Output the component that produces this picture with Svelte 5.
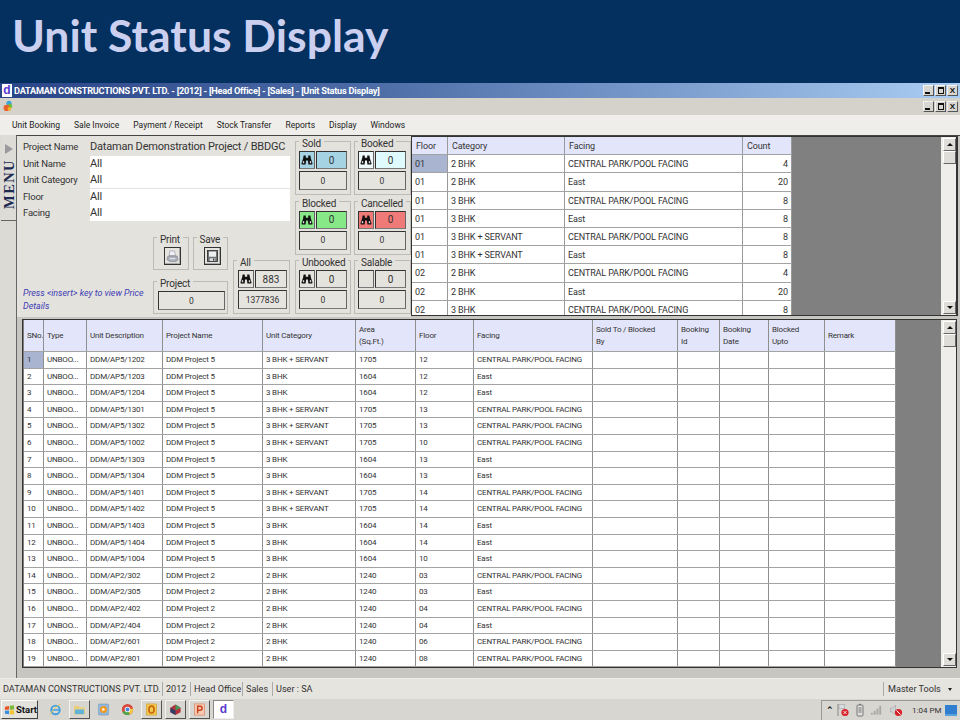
<script>
  const menus = ['Unit Booking', 'Sale Invoice', 'Payment / Receipt', 'Stock Transfer', 'Reports', 'Display', 'Windows'];
  const form = [['Project Name', 'Dataman Demonstration Project / BBDGC'], ['Unit Name', 'All'], ['Unit Category', 'All'], ['Floor', 'All'], ['Facing', 'All']];
  const cards = [
    { name: 'Sold', tone: 'sold', icon: true },
    { name: 'Booked', tone: 'booked', icon: true },
    { name: 'Blocked', tone: 'blocked', icon: true },
    { name: 'Cancelled', tone: 'cancelled', icon: true },
    { name: 'Unbooked', tone: 'plain', icon: true },
    { name: 'Salable', tone: 'plain', icon: false }
  ];
  const C = 'CENTRAL PARK/POOL FACING';
  const topRows = [
    ['01', '2 BHK', C, 4], ['01', '2 BHK', 'East', 20], ['01', '3 BHK', C, 8], ['01', '3 BHK', 'East', 8],
    ['01', '3 BHK + SERVANT', C, 8], ['01', '3 BHK + SERVANT', 'East', 8], ['02', '2 BHK', C, 4], ['02', '2 BHK', 'East', 20], ['02', '3 BHK', C, 8]
  ];
  const S = '3 BHK + SERVANT', B3 = '3 BHK', B2 = '2 BHK';
  const rows = [
    ['AP5/1202', 5, S, 1705, 12, C], ['AP5/1203', 5, B3, 1604, 12, 'East'], ['AP5/1204', 5, B3, 1604, 12, 'East'],
    ['AP5/1301', 5, S, 1705, 13, C], ['AP5/1302', 5, S, 1705, 13, C], ['AP5/1002', 5, S, 1705, 10, C],
    ['AP5/1303', 5, B3, 1604, 13, 'East'], ['AP5/1304', 5, B3, 1604, 13, 'East'], ['AP5/1401', 5, S, 1705, 14, C],
    ['AP5/1402', 5, S, 1705, 14, C], ['AP5/1403', 5, B3, 1604, 14, 'East'], ['AP5/1404', 5, B3, 1604, 14, 'East'],
    ['AP5/1004', 5, B3, 1604, 10, 'East'], ['AP2/302', 2, B2, 1240, '03', C], ['AP2/305', 2, B2, 1240, '03', 'East'],
    ['AP2/402', 2, B2, 1240, '04', C], ['AP2/404', 2, B2, 1240, '04', 'East'], ['AP2/601', 2, B2, 1240, '06', C], ['AP2/801', 2, B2, 1240, '08', C]
  ];
  const heads = ['SNo.', 'Type', 'Unit Description', 'Project Name', 'Unit Category', 'Area\n(Sq.Ft.)', 'Floor', 'Facing', 'Sold To / Blocked\nBy', 'Booking\nId', 'Booking\nDate', 'Blocked\nUpto', 'Remark'];
</script>

{#snippet binoc()}
  <svg class="binoc" viewBox="0 0 12 10" aria-hidden="true">
    <path d="M2.6 0.6h2.2v2.2h2.4V0.6h2.2l0.5 3 1.6 4.6-0.3 1.4H7.4L6.9 5.4H5.1L4.6 9.6H0.8L0.5 8.2 2.1 3.6z" fill="#111" />
    <rect x="1.8" y="6.2" width="1.4" height="2" fill="#ddd" />
    <rect x="8.8" y="6.2" width="1.4" height="2" fill="#ddd" />
  </svg>
{/snippet}

{#snippet scrollbar()}
  <div class="scroll">
    <div class="sbtn"><span class="up"></span></div>
    <div class="thumb"></div>
    <div class="track"></div>
    <div class="sbtn"><span class="down"></span></div>
  </div>
{/snippet}

{#snippet winbtns()}
  <div class="winbtns">
    <span class="wb"><i class="min"></i></span>
    <span class="wb"><i class="rest"></i></span>
    <span class="wb x">X</span>
  </div>
{/snippet}

{#snippet appicon()}
  <span class="appicon">d</span>
{/snippet}

<div class="page">
  <header class="slide"><h1>Unit Status Display</h1></header>

  <div class="titlebar">
    {@render appicon()}
    <span class="ttext">DATAMAN CONSTRUCTIONS PVT. LTD. - [2012] - [Head Office] - [Sales] - [Unit Status Display]</span>
    {@render winbtns()}
  </div>

  <div class="toolbar">
    <svg class="logo" viewBox="0 0 12 13" aria-hidden="true">
      <circle cx="6.5" cy="3" r="2.8" fill="#3aa6d8" />
      <circle cx="7.5" cy="6" r="2.6" fill="#6cbf3c" />
      <circle cx="4" cy="8" r="3.4" fill="#e8622a" />
      <circle cx="7" cy="9" r="2" fill="#f2b62c" />
    </svg>
    {@render winbtns()}
  </div>

  <nav class="menubar">
    {#each menus as m}<span>{m}</span>{/each}
  </nav>

  <div class="body">
    <aside class="side">
      <div class="tab">
        <span class="tri"></span>
        <span class="menu">MENU</span>
      </div>
    </aside>

    <main class="content">
      <section class="upper">
        <div class="panel">
          <div class="left">
            <div class="form">
              {#each form as [k, v], i}
                <div class="frow">
                  <span class="flabel">{k}</span>
                  <span class="fval" class:white={i > 0}>{v}</span>
                </div>
              {/each}
            </div>
            <div class="lower">
              <p class="hint"><em>Press &lt;insert&gt; key to view Price Details</em></p>
              <div class="mid">
                <div class="pair">
                  <div class="group small">
                    <span class="legend">Print</span>
                    <div class="tool">
                      <svg viewBox="0 0 14 14" aria-hidden="true">
                        <path d="M4 1.5h5l1.5 5H3.5z" fill="#eef0f5" stroke="#8a8f9a" stroke-width=".6" />
                        <path d="M2 7h10l1 4-2 2H4l-3-2z" fill="#a9adb6" stroke="#7a7e88" stroke-width=".6" />
                        <rect x="4" y="9" width="6" height="1.5" fill="#dfe2e8" />
                      </svg>
                    </div>
                  </div>
                  <div class="group small">
                    <span class="legend">Save</span>
                    <div class="tool">
                      <svg viewBox="0 0 14 14" aria-hidden="true">
                        <rect x="1.5" y="1" width="11" height="12" fill="#6d7176" stroke="#222" stroke-width=".8" />
                        <rect x="3.2" y="2.2" width="7.6" height="5.6" fill="#eceef0" />
                        <rect x="4" y="9.4" width="6" height="3" fill="#d8dade" />
                        <rect x="7.6" y="9.8" width="1.4" height="2.2" fill="#333" />
                      </svg>
                    </div>
                  </div>
                </div>
                <div class="group project">
                  <span class="legend">Project</span>
                  <div class="box pbox">0</div>
                </div>
              </div>
              <div class="group card allcard">
                <span class="legend">All</span>
                <div class="cardtop">
                  <div class="box ic">{@render binoc()}</div>
                  <div class="box val big">883</div>
                </div>
                <div class="box total">1377836</div>
              </div>
            </div>
          </div>

          <div class="cards">
            {#each cards as c}
              <div class="group card">
                <span class="legend">{c.name}</span>
                <div class="cardtop">
                  <div class="box ic {c.tone}">{#if c.icon}{@render binoc()}{/if}</div>
                  <div class="box val {c.tone}">0</div>
                </div>
                <div class="box total">0</div>
              </div>
            {/each}
          </div>
        </div>

        <div class="frame topframe">
          <div class="gridarea">
            <div class="trow thead">
              <span>Floor</span><span>Category</span><span>Facing</span><span>Count</span>
            </div>
            {#each topRows as r, i}
              <div class="trow">
                <span class:sel={i === 0}>{r[0]}</span><span>{r[1]}</span><span>{r[2]}</span><span class="num">{r[3]}</span>
              </div>
            {/each}
          </div>
          {@render scrollbar()}
        </div>
      </section>

      <section class="frame bottomframe">
        <div class="gridarea">
          <div class="brow bhead">
            {#each heads as h}<span>{h}</span>{/each}
          </div>
          {#each rows as r, i}
            <div class="brow">
              <span class:sel={i === 0}>{i + 1}</span>
              <span>UNBOO...</span>
              <span>DDM/{r[0]}</span>
              <span>DDM Project {r[1]}</span>
              <span>{r[2]}</span>
              <span>{r[3]}</span>
              <span>{r[4]}</span>
              <span>{r[5]}</span>
              <span></span><span></span><span></span><span></span><span></span>
            </div>
          {/each}
        </div>
        {@render scrollbar()}
      </section>
    </main>
  </div>

  <footer class="status">
    <span class="s1">DATAMAN CONSTRUCTIONS PVT. LTD.</span>
    <span class="s2">2012</span>
    <span class="s3">Head Office</span>
    <span class="s4">Sales</span>
    <span class="s5">User : SA</span>
    <span class="tools">Master Tools <i class="caret"></i></span>
  </footer>

  <div class="taskbar">
    <div class="start">
      <svg viewBox="0 0 12 12" aria-hidden="true">
        <path d="M1 2.5 5.5 1.5v4L1 6z" fill="#e8562a" /><path d="M6.3 1.3 11 .8v4.6l-4.7.2z" fill="#7cb83a" />
        <path d="M1 6.8l4.5-.3v4L1 10z" fill="#3a8ee0" /><path d="M6.3 6.4l4.7-.2v4.8l-4.7-.5z" fill="#f4c430" />
      </svg>
      <b>Start</b>
    </div>
    <div class="tasks">
      <span class="task"><svg viewBox="0 0 14 14" aria-hidden="true"><circle cx="7" cy="7.5" r="4.6" fill="none" stroke="#3f9fe0" stroke-width="2" /><path d="M3 7.5h8" stroke="#3f9fe0" stroke-width="1.6" /><path d="M1.5 12.5C3 8 8 3 12.5 1.5" fill="none" stroke="#e5c04a" stroke-width=".9" /></svg></span>
      <span class="task raised"><svg viewBox="0 0 14 14" aria-hidden="true"><path d="M1 3h5l1 1.5h6v8H1z" fill="#e9cf7c" /><rect x="2" y="7" width="10" height="5" fill="#5fb3d8" /></svg></span>
      <span class="task"><svg viewBox="0 0 14 14" aria-hidden="true"><rect x="1.5" y="1" width="11" height="12" rx="1" fill="#8fb6dc" stroke="#6a90b8" stroke-width=".5" /><circle cx="7" cy="7" r="3.8" fill="#f19a22" /><path d="M5.8 5l3 2-3 2z" fill="#fff" /></svg></span>
      <span class="task"><svg viewBox="0 0 14 14" aria-hidden="true"><circle cx="7" cy="7" r="6" fill="#d9473a" /><path d="M7 7 1.6 9.6A6 6 0 0 0 9.5 12.4z" fill="#4aa84a" /><path d="M7 7 9.5 12.4A6 6 0 0 0 12.9 6z" fill="#f1c83a" /><circle cx="7" cy="7" r="3" fill="#fff" /><circle cx="7" cy="7" r="2.1" fill="#4a86d8" /></svg></span>
      <span class="task raised"><svg viewBox="0 0 14 14" aria-hidden="true"><rect x="1.5" y="1" width="11" height="12" fill="#f2c84a" stroke="#c99a2a" stroke-width=".6" /><ellipse cx="7" cy="7" rx="2.8" ry="3.8" fill="none" stroke="#c8660f" stroke-width="1.8" /></svg></span>
      <span class="task raised"><svg viewBox="0 0 14 14" aria-hidden="true"><path d="M7 1.5 12.5 5v5L7 13 1.5 10V5z" fill="#b5303a" /><path d="M7 1.5 12.5 5 7 8z" fill="#3e9a5a" /><path d="M1.5 5 7 8v5L1.5 10z" fill="#2f3e66" /></svg></span>
      <span class="task raised"><svg viewBox="0 0 14 14" aria-hidden="true"><rect x="1.5" y="1" width="11" height="12" fill="#f6c9b4" stroke="#d8744a" stroke-width=".6" /><path d="M5 11V3.5h2.6a2 2 0 0 1 0 4.4H5" fill="none" stroke="#c8431a" stroke-width="1.6" /></svg></span>
      <span class="task active">{@render appicon()}</span>
    </div>
    <div class="tray">
      <span class="chev">⌃</span>
      <svg class="t1" viewBox="0 0 14 14" aria-hidden="true"><path d="M2 1v12" stroke="#888" /><path d="M3 1.5h6l-1 2 1 2H3z" fill="#d8dde4" stroke="#999" stroke-width=".5" /><circle cx="9" cy="9.5" r="3.6" fill="#d8232a" /><path d="M7.6 8.1l2.8 2.8m0-2.8-2.8 2.8" stroke="#fff" stroke-width=".9" /></svg>
      <svg class="t2" viewBox="0 0 8 14" aria-hidden="true"><rect x="1" y="2" width="6" height="11" rx="1" fill="#dfe0dc" stroke="#777" /><rect x="3" y=".8" width="2" height="1.2" fill="#777" /><rect x="2.4" y="4" width="3.2" height="6" fill="#aaa" /></svg>
      <svg class="t3" viewBox="0 0 14 12" aria-hidden="true"><g fill="#a8a8a4"><rect x="1" y="9" width="2" height="2" /><rect x="4" y="7" width="2" height="4" /><rect x="7" y="4.5" width="2" height="6.5" /><rect x="10" y="1.5" width="2" height="9.5" /></g></svg>
      <svg class="t4" viewBox="0 0 14 14" aria-hidden="true"><path d="M1.5 5h2l3-3v10l-3-3h-2z" fill="#cfd2d4" stroke="#999" stroke-width=".5" /><circle cx="9.5" cy="9.5" r="3.6" fill="#d8232a" /><path d="M7.5 7.5l4 4" stroke="#fff" stroke-width="1" /></svg>
      <span class="clock">1:04 PM</span>
      <svg class="t5" viewBox="0 0 12 11" aria-hidden="true"><rect width="12" height="9" fill="#2f7ed0" /><rect y="9" width="12" height="2" fill="#56a0dc" /></svg>
    </div>
  </div>
</div>

<style>
  :global(body) { margin: 0; }
  .page {
    width: 960px; height: 720px; overflow: hidden; display: flex; flex-direction: column;
    font-family: Roboto, "Liberation Sans", Arial, sans-serif; color: #2b2b2b; background: #d8d6d1;
  }
  .slide { height: 83px; flex: none; background: #03305f; box-sizing: border-box; padding: 10px 0 0 12px; }
  h1 { margin: 0; font: 700 44.5px/50px Lato, sans-serif; color: #ccd0f0; }

  .titlebar {
    height: 15px; flex: none; display: flex; align-items: center; padding: 0 2px;
    background: linear-gradient(90deg, #2a4488 0%, #4e6ea8 40%, #a9cdf3 100%);
  }
  .appicon {
    width: 10px; height: 13px; flex: none; background: #fff; color: #5a3ad0; display: block;
    font: 700 12px/12px "Liberation Sans", sans-serif; text-align: center;
  }
  .ttext { margin-left: 2px; color: #fff; font: 700 9.2px/15px Roboto, sans-serif; letter-spacing: -0.23px; white-space: nowrap; }
  .winbtns { margin-left: auto; display: flex; gap: 1px; }
  .wb {
    width: 11px; height: 11px; box-sizing: border-box; background: #d8d6d0; display: block; position: relative;
    border: 1px solid; border-color: #f4f3ef #555 #555 #f4f3ef; font: 700 8px/9px "Liberation Sans", sans-serif; text-align: center; color: #111;
  }
  .min { position: absolute; left: 1px; bottom: 1px; width: 5px; height: 2px; background: #111; }
  .rest { position: absolute; left: 2px; top: 1px; width: 4px; height: 4px; border: 1px solid #111; border-top-width: 2px; }

  .toolbar { height: 17px; flex: none; background: #d5d2cb; display: flex; align-items: center; padding: 0 2px 0 3px; box-sizing: border-box; }
  .logo { width: 11px; height: 13px; }

  .menubar {
    height: 20px; flex: none; background: #efeeea; display: flex; gap: 14px; padding-left: 12px; box-sizing: border-box;
    font-size: 8.5px; line-height: 20px; color: #222;
  }

  .body { flex: 1; min-height: 0; display: flex; background: #d3d1cc; }
  .side { width: 16px; flex: none; background: #dcdad5; }
  .tab {
    height: 86px; width: 15px; margin-left: 1px; box-sizing: border-box; background: #dedcd7; border-bottom: 1px solid #666;
    display: flex; flex-direction: column; align-items: center; padding-top: 9px; overflow: hidden;
  }
  .tri { border-left: 8px solid #9a9a9e; border-top: 5px solid transparent; border-bottom: 5px solid transparent; width: 0; height: 0; flex: none; }
  .menu {
    margin-top: 5px; writing-mode: vertical-rl; transform: rotate(180deg);
    font: 700 14.5px/14px "Liberation Serif", serif; letter-spacing: 1.4px; color: #1d2a52;
  }
  .content {
    flex: 1; min-width: 0; display: flex; flex-direction: column; box-sizing: border-box;
    border-left: 1px solid #666; border-top: 1px solid #444; padding-bottom: 10px; background: #c8c6c1;
  }

  .upper { height: 181px; flex: none; display: flex; }
  .panel { width: 394px; flex: none; display: flex; background: #e4e2dd; box-sizing: border-box; padding: 0 0 0 6px; }
  .left { width: 272px; flex: none; display: flex; flex-direction: column; }
  .form { padding: 3px 5px 0 0; }
  .frow { display: grid; grid-template-columns: 67px 1fr; height: 16.5px; align-items: stretch; }
  .flabel { font-size: 9.5px; letter-spacing: -0.2px; line-height: 15px; color: #333; white-space: nowrap; }
  .fval { font-size: 11px; letter-spacing: -0.2px; line-height: 16px; color: #333; white-space: nowrap; border-bottom: 1px solid transparent; box-sizing: border-box; }
  .fval.white { background: #fff; border-bottom-color: #e4e2dd; }

  .lower { margin-top: auto; display: flex; align-items: flex-end; padding-bottom: 3px; }
  .hint { margin: 0; width: 130px; flex: none; font-size: 8.9px; line-height: 13px; color: #3b3bb4; padding-bottom: 1px; }
  .mid { width: 75px; flex: none; display: flex; flex-direction: column; gap: 11px; margin-right: 5px; }
  .pair { display: flex; gap: 4px; }

  .group { position: relative; box-sizing: border-box; border: 1px solid #bdbbb6; }
  .legend {
    position: absolute; top: -4px; left: 3px; padding: 0 3px; background: #e4e2dd;
    font-size: 10px; letter-spacing: -0.2px; line-height: 12px; color: #333; white-space: nowrap;
  }
  .small { width: 36px; height: 33px; padding: 9px 0 0 10px; }
  .tool {
    width: 17px; height: 18px; box-sizing: border-box; border: 1px solid #333; background: #e6e4df; padding: 1px;
    box-shadow: inset -1px -1px 0 #aaa;
  }
  .tool svg { display: block; width: 100%; height: 100%; }
  .project { height: 33px; padding: 9px 0 0 4px; }
  .pbox { width: 67px; height: 19px; }

  .box {
    box-sizing: border-box; border: 1px solid; border-color: #333 #666 #777 #333; background: #e6e4df;
    display: flex; align-items: center; justify-content: center; font-size: 8.5px; color: #333;
  }
  .cards {
    width: 116px; flex: none; display: grid; grid-template-columns: 56px 57px; gap: 5.5px 3px;
    grid-auto-rows: 54px; padding: 5px 0 0 0;
  }
  .card { padding: 9px 0 0 3px; height: 54px; }
  .cardtop { display: flex; gap: 1px; margin-bottom: 2px; width: 48px; height: 18px; }
  .ic { width: 16px; flex: none; }
  .val { flex: 1; font-size: 10px; }
  .total { width: 48px; height: 19px; }
  .allcard { width: 57px; padding-left: 4px; }
  .allcard .cardtop, .allcard .total { width: 49px; }
  .big { font-size: 10px; }
  .binoc { width: 12px; height: 10px; display: block; }
  .sold { background: #a6d3e4; }
  .booked { background: #e0fbfd; }
  .booked.ic { background: #eefafa; }
  .blocked { background: #86e886; }
  .cancelled { background: #f07a78; }
  .plain { background: #e4e2dd; }

  .frame { display: flex; box-sizing: border-box; background: #808080; overflow: hidden; }
  .topframe { flex: 1; min-width: 0; border: 1px solid #333; border-width: 1px 2px 1px 1px; height: 180px; margin-right: 2px; }
  .gridarea { flex: 1; min-width: 0; overflow: hidden; }

  .trow {
    display: grid; grid-template-columns: 36px 117px 178px 49px; width: 380px; height: 18.2px; box-sizing: border-box;
    background: #fff; font-size: 9px; letter-spacing: -0.12px; line-height: 18px; color: #333; border-bottom: 1px solid #a3a3a3;
  }
  .trow span { padding-left: 3px; border-right: 1px solid #9a9a9a; white-space: nowrap; overflow: hidden; }
  .trow .num { text-align: right; padding: 0 3px 0 0; }
  .thead { background: #e3e6fa; }
  .thead span { padding-left: 4px; }
  .sel { background: #a8b4d0; }

  .scroll { width: 15px; flex: none; display: flex; flex-direction: column; background: #efeeea; box-sizing: border-box; padding: 1px 0 1px 2px; }
  .sbtn {
    height: 13px; flex: none; box-sizing: border-box; background: #dfddd8; border: 1px solid; border-color: #fff #666 #666 #fff;
    display: flex; align-items: center; justify-content: center;
  }
  .up { border-left: 3px solid transparent; border-right: 3px solid transparent; border-bottom: 3px solid #111; }
  .down { border-left: 3px solid transparent; border-right: 3px solid transparent; border-top: 3px solid #111; }
  .thumb { height: 13px; flex: none; box-sizing: border-box; background: #dfddd8; border: 1px solid; border-color: #fff #666 #666 #fff; }
  .track { flex: 1; background: #efeeea; }

  .bottomframe { margin: 2px 3px 0 5px; flex: 1; min-height: 0; border: 1px solid #333; padding: 0 0 0 1px; }
  .brow {
    display: grid; grid-template-columns: 20px 43px 76px 100px 93px 60px 58px 119px 85px 42px 49px 56px 71px; width: 872px;
    height: 16.6px; box-sizing: border-box; background: #fff; font-size: 8px; letter-spacing: -0.18px; line-height: 16.6px; color: #333; border-bottom: 1px solid #a3a3a3;
  }
  .brow span { padding-left: 3px; border-right: 1px solid #8f8f8f; white-space: nowrap; overflow: hidden; }
  .bhead { height: 32px; background: #e3e6fa; line-height: 12px; }
  .bhead span { padding: 0 3px; white-space: pre-line; display: flex; align-items: center; }

  .status {
    height: 21px; flex: none; display: flex; align-items: center; background: #e6e4df; font-size: 9.1px; color: #333;
    border-top: 1px solid #efeeea; box-sizing: border-box; padding-left: 3px; white-space: nowrap;
  }
  .status span { border-left: 1px solid #aaa; padding: 0 3px; line-height: 14px; }
  .status .s1 { border-left: 0; padding-left: 0; width: 159px; box-sizing: border-box; }
  .s2 { width: 28px; box-sizing: border-box; }
  .s3 { width: 52px; box-sizing: border-box; }
  .s4 { width: 30px; box-sizing: border-box; }
  .status .tools { margin-left: auto; width: 77px; box-sizing: border-box; padding-left: 4px; }
  .caret { display: inline-block; margin-left: 5px; border-left: 2.5px solid transparent; border-right: 2.5px solid transparent; border-top: 3px solid #222; vertical-align: 1px; }

  .taskbar { height: 21px; flex: none; display: flex; align-items: center; background: #d8d6d0; padding-left: 1px; box-sizing: border-box; }
  .start {
    width: 37px; height: 19px; box-sizing: border-box; display: flex; align-items: center; gap: 1px; padding-left: 2px;
    background: #e4e2dd; border: 1px solid; border-color: #fff #444 #444 #fff; font-size: 9.5px; color: #111;
  }
  .start svg { width: 11px; height: 12px; flex: none; }
  .tasks { display: flex; margin-left: 7px; gap: 3px; }
  .task { width: 21px; height: 19px; box-sizing: border-box; display: flex; align-items: center; justify-content: center; border: 1px solid transparent; }
  .task svg { width: 13px; height: 13px; display: block; }
  .raised { border-color: #f4f3ef #555 #555 #f4f3ef; }
  .active { background: #fff; border-color: #888 #eee #eee #888; }
  .tray {
    margin-left: auto; width: 139px; height: 20px; box-sizing: border-box; display: flex; align-items: center;
    border-left: 1px solid #999; border-top: 1px solid #999; padding-left: 4px;
  }
  .chev { font-size: 9px; font-weight: 700; width: 10px; line-height: 10px; color: #222; }
  .tray svg { display: block; flex: none; }
  .t1 { width: 14px; height: 14px; }
  .t2 { width: 8px; height: 14px; margin-left: 6px; }
  .t3 { width: 13px; height: 12px; margin-left: 6px; }
  .t4 { width: 14px; height: 14px; margin-left: 6px; }
  .clock { margin-left: 9px; font-size: 8px; color: #333; white-space: nowrap; width: 33px; }
  .t5 { width: 12px; height: 11px; }
</style>
